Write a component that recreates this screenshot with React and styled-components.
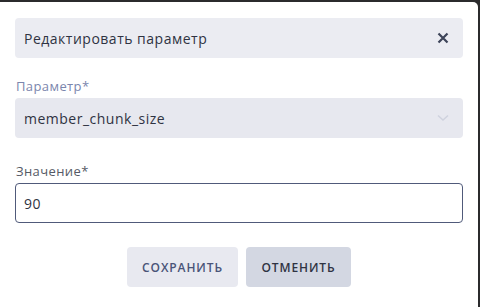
import React from "react";
import styled, { createGlobalStyle } from "styled-components";

const Global = createGlobalStyle`
  html, body { margin: 0; padding: 0; background: #2b2b2d; }
  body { font-family: "Open Sans", "Noto Sans", sans-serif; }
  * { box-sizing: border-box; }
`;

const Page = styled.div`
  width: 480px;
  height: 307px;
  padding-top: 2px;
  padding-right: 2px;
  background: #2b2b2d;
`;

const Modal = styled.div`
  width: 478px;
  height: 305px;
  background: #ffffff;
  border-top-right-radius: 5px;
  padding: 16px 15px 0 15px;
  display: flex;
  flex-direction: column;
`;

const Header = styled.div`
  height: 40px;
  background: #ebecf2;
  border-radius: 4px;
  display: flex;
  align-items: center;
  justify-content: space-between;
  padding: 0 12px 0 9px;
  color: #2f3342;
  font-size: 14px;
  letter-spacing: 0.5px;
`;

const CloseBtn = styled.button`
  border: 0;
  background: transparent;
  padding: 0;
  width: 16px;
  height: 16px;
  display: flex;
  align-items: center;
  justify-content: center;
  cursor: pointer;
`;

const Field = styled.div`
  display: flex;
  flex-direction: column;
  margin-top: ${(p) => p.$top}px;
`;

const Label = styled.label`
  font-size: 13px;
  line-height: 16px;
  color: ${(p) => p.$color};
  margin-bottom: 4px;
  padding-left: 1px;
  letter-spacing: 0.4px;
`;

const Select = styled.div`
  height: 40px;
  background: #e7e8ef;
  border-radius: 4px;
  display: flex;
  align-items: center;
  justify-content: space-between;
  padding: 0 14px 0 9px;
  font-size: 14px;
  color: #2f3342;
  letter-spacing: 0.5px;
`;

const Input = styled.input`
  height: 40px;
  border: 1px solid #505a7a;
  border-radius: 4px;
  padding: 0 8px;
  font-family: inherit;
  font-size: 14px;
  color: #2f3342;
  outline: none;
  letter-spacing: 0.5px;
`;

const Actions = styled.div`
  display: flex;
  justify-content: center;
  gap: 8px;
  margin-top: 24px;
`;

const Button = styled.button`
  height: 40px;
  width: ${(p) => p.$w}px;
  border: 0;
  border-radius: 4px;
  background: ${(p) => p.$bg};
  color: ${(p) => p.$color};
  font-family: inherit;
  font-size: 12px;
  font-weight: 600;
  letter-spacing: 0.9px;
  cursor: pointer;
`;

export default function App() {
  return (
    <Page>
      <Global />
      <Modal>
        <Header>
          <span>Редактировать параметр</span>
          <CloseBtn aria-label="close">
            <svg width="12" height="12" viewBox="0 0 12 12">
              <path d="M1.5 1.5 L10.5 10.5 M10.5 1.5 L1.5 10.5" stroke="#3d4459" strokeWidth="2.2" strokeLinecap="butt" />
            </svg>
          </CloseBtn>
        </Header>
        <Field $top={20}>
          <Label $color="#7b86ad">Параметр*</Label>
          <Select>
            <span>member_chunk_size</span>
            <svg width="12" height="8" viewBox="0 0 12 8">
              <path d="M1 1.5 L6 6 L11 1.5" fill="none" stroke="#cfd2de" strokeWidth="1.5" />
            </svg>
          </Select>
        </Field>
        <Field $top={25}>
          <Label $color="#555a66">Значение*</Label>
          <Input defaultValue="90" />
        </Field>
        <Actions>
          <Button $w={111} $bg="#e8e9f0" $color="#4a5478">СОХРАНИТЬ</Button>
          <Button $w={105} $bg="#d3d7e2" $color="#2f3342">ОТМЕНИТЬ</Button>
        </Actions>
      </Modal>
    </Page>
  );
}
